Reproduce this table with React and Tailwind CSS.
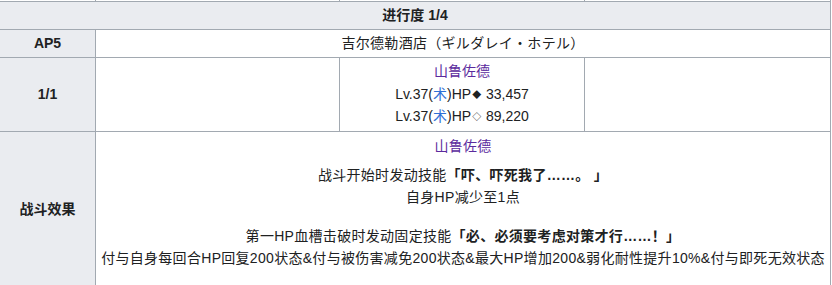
import React from "react";

const font = { fontFamily: '"Liberation Sans", Arial, "Noto Sans CJK SC", sans-serif' };

const Servant = () => <span className="text-[#5b2a9d]">山鲁佐德</span>;

const Caster = () => <span className="text-[#2f6fd6]">术</span>;

const Gem = ({ char }) => (
  <span className="inline-block align-[1px] text-[9px] leading-none mx-[1px]">{char}</span>
);

const App = () => {
  return (
    <div className="w-[832px] h-[285px] overflow-hidden bg-white">
      <div
        className="grid grid-cols-[96px_244px_245px_246px] text-[14px] text-[#202122]"
        style={font}
      >
        {/* tail of the previous table row */}
        <div className="h-[2px] border-r border-b border-[#a2a9b1]" />
        <div className="h-[2px] border-r border-b border-[#a2a9b1]" />
        <div className="h-[2px] border-r border-b border-[#a2a9b1]" />
        <div className="h-[2px] border-r border-b border-[#a2a9b1]" />

        <div className="col-span-4 h-[28px] flex items-center justify-center bg-[#eaecf0] border-r border-b border-[#a2a9b1] font-bold">
          进行度 1/4
        </div>

        <div className="h-[28px] flex items-center justify-center bg-[#eaecf0] border-r border-b border-[#a2a9b1] font-bold">
          AP5
        </div>
        <div className="col-span-3 h-[28px] flex items-center justify-center border-r border-b border-[#a2a9b1] tracking-[0.3px]">
          吉尔德勒酒店（ギルダレイ・ホテル）
        </div>

        <div className="h-[74px] flex items-center justify-center bg-[#eaecf0] border-r border-b border-[#a2a9b1] font-bold">
          1/1
        </div>
        <div className="h-[74px] border-r border-b border-[#a2a9b1]" />
        <div className="h-[74px] flex flex-col items-center justify-center pb-[3px] border-r border-b border-[#a2a9b1]">
          <div className="h-[24px] leading-[24px]">
            <Servant />
          </div>
          <div className="h-[22px] leading-[22px]">
            Lv.37(<Caster />)HP<Gem char="◆" /> 33,457
          </div>
          <div className="h-[22px] leading-[22px]">
            Lv.37(<Caster />)HP<Gem char="◇" /> 89,220
          </div>
        </div>
        <div className="h-[74px] border-r border-b border-[#a2a9b1]" />

        <div className="h-[155px] flex items-center justify-center bg-[#eaecf0] border-r border-b border-[#a2a9b1] font-bold">
          战斗效果
        </div>
        <div className="col-span-3 h-[155px] flex flex-col items-center pt-[3px] leading-[22px] tracking-[0.3px] border-r border-b border-[#a2a9b1]">
          <Servant />
          <div className="mt-[7px] flex flex-col items-center">
            <span>
              战斗开始时发动技能<b>「吓、吓死我了……。&nbsp;」</b>
            </span>
            <span>自身HP减少至1点</span>
          </div>
          <div className="mt-[17px] flex flex-col items-center">
            <span>
              第一HP血槽击破时发动固定技能<b>「必、必须要考虑对策才行……！」</b>
            </span>
            <span>
              付与自身每回合HP回复200状态&amp;付与被伤害减免200状态&amp;最大HP增加200&amp;弱化耐性提升10%&amp;付与即死无效状态
            </span>
          </div>
        </div>
      </div>
    </div>
  );
};

export default App;
